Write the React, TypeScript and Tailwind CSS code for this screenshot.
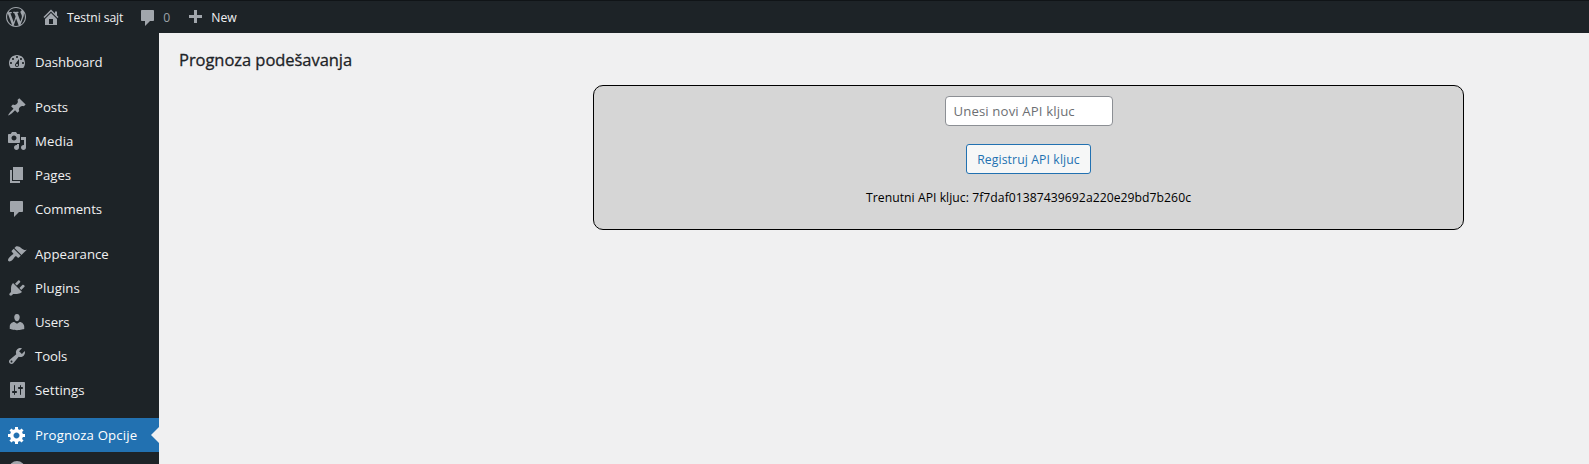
type IconProps = { d: string; size?: string; className?: string };

function Icon({ d, size = "size-5", className = "" }: IconProps) {
  return (
    <svg viewBox="0 0 20 20" fill="currentColor" className={`${size} shrink-0 ${className}`} aria-hidden="true">
      <path d={d} />
    </svg>
  );
}

const icons = {
  wordpress:
    "M20 10c0-5.51-4.49-10-10-10C4.48 0 0 4.49 0 10c0 5.52 4.48 10 10 10 5.51 0 10-4.48 10-10zM7.78 15.37L4.37 6.22c.55-.02 1.17-.08 1.17-.08.5-.06.44-1.13-.06-1.11 0 0-1.45.11-2.37.11-.18 0-.37 0-.58-.01C4.12 2.69 6.87 1.11 10 1.11c2.33 0 4.45.87 6.05 2.34-.68-.11-1.65.39-1.65 1.58 0 .74.45 1.36.9 2.1.35.61.55 1.36.55 2.46 0 1.49-1.4 5-1.4 5l-3.03-8.37c.54-.02.82-.17.82-.17.5-.05.44-1.25-.06-1.22 0 0-1.44.12-2.38.12-.87 0-2.33-.12-2.33-.12-.5-.03-.56 1.2-.06 1.22l.92.08 1.26 3.41zM17.41 10c.24-.64.74-1.87.43-4.25.7 1.29 1.05 2.71 1.05 4.25 0 3.29-1.73 6.24-4.4 7.78.97-2.59 1.94-5.2 2.92-7.78zM6.1 18.09C3.12 16.65 1.11 13.53 1.11 10c0-1.3.23-2.48.72-3.59C3.25 10.3 4.67 14.2 6.1 18.09zm4.03-6.63l2.58 6.98c-.86.29-1.76.45-2.71.45-.79 0-1.57-.11-2.29-.33.81-2.38 1.62-4.74 2.42-7.1z",
  home: "M16 8.5l1.53 1.53-1.06 1.06L10 4.6l-6.47 6.49-1.06-1.06L10 2.5l4 4v-2h2v4zm-6-2.46l6 5.99V18H4v-5.97zM12 17v-5H8v5h4z",
  comments: "M4 2h11c.55 0 1 .45 1 1v9c0 .55-.45 1-1 1h-3l-5 5v-5H4c-.55 0-1-.45-1-1V3c0-.55.45-1 1-1z",
  plus: "M17 7v3h-5v5H9v-5H4V7h5V2h3v5h5z",
  dashboard:
    "M3.76 16h12.48c1.1-1.37 1.76-3.11 1.76-5 0-4.42-3.58-8-8-8s-8 3.58-8 8c0 1.89.66 3.63 1.76 5zM10 4c.55 0 1 .45 1 1s-.45 1-1 1-1-.45-1-1 .45-1 1-1zM6 6c.55 0 1 .45 1 1s-.45 1-1 1-1-.45-1-1 .45-1 1-1zm8 0c.55 0 1 .45 1 1s-.45 1-1 1-1-.45-1-1 .45-1 1-1zm-5.37 5.55L12 7v6c0 1.1-.9 2-2 2s-2-.9-2-2c0-.57.24-1.08.63-1.45zM4 10c.55 0 1 .45 1 1s-.45 1-1 1-1-.45-1-1 .45-1 1-1zm12 0c.55 0 1 .45 1 1s-.45 1-1 1-1-.45-1-1 .45-1 1-1zm-5 3c0-.55-.45-1-1-1s-1 .45-1 1 .45 1 1 1 1-.45 1-1z",
  post: "M10.44 3.02l1.82-1.82 6.36 6.35-1.83 1.82c-1.05-.68-2.48-.57-3.41.36l-.75.75c-.92.93-1.04 2.35-.35 3.41l-1.83 1.82-2.41-2.41-2.8 2.79c-.42.42-3.38 2.71-3.8 2.29s1.86-3.39 2.28-3.81l2.79-2.79L4.1 9.36l1.83-1.82c1.05.69 2.48.57 3.4-.36l.75-.75c.93-.92 1.05-2.35.36-3.41z",
  media:
    "M13 11V4c0-.55-.45-1-1-1h-1.67L9 1H5L3.67 3H2c-.55 0-1 .45-1 1v7c0 .55.45 1 1 1h10c.55 0 1-.45 1-1zM7 4.5c1.38 0 2.5 1.12 2.5 2.5S8.38 9.5 7 9.5 4.5 8.38 4.5 7 5.62 4.5 7 4.5zM14 6h5v10.5c0 1.38-1.12 2.5-2.5 2.5S14 17.88 14 16.5s1.12-2.5 2.5-2.5c.17 0 .34.02.5.05V9h-3V6zm-4 8.05V13h2v3.5c0 1.38-1.12 2.5-2.5 2.5S7 17.88 7 16.5 8.12 14 9.5 14c.17 0 .34.02.5.05z",
  page: "M6 15V2h10v13H6zm-1 1h8v2H3V5h2v11z",
  appearance:
    "M14.48 11.06L7.41 3.99l1.5-1.5c.5-.56 2.3-.47 3.51.32 1.21.8 1.43 1.28 2.91 2.1 1.18.64 2.45 1.26 4.45.85zm-.71.71L6.7 4.7 4.93 6.47c-.39.39-.39 1.02 0 1.41l1.06 1.06c.39.39.39 1.03 0 1.42-.6.6-1.43 1.11-2.21 1.69-.35.26-.7.53-1.01.84C1.43 14.23.4 16.08 1.4 17.07c.99 1 2.84-.03 4.18-1.36.31-.31.58-.66.85-1.02.57-.78 1.08-1.61 1.69-2.21.39-.39 1.02-.39 1.41 0l1.06 1.06c.39.39 1.02.39 1.41 0z",
  plugins:
    "M13.11 4.36L9.87 7.6 8 5.73l3.24-3.24c.35-.34 1.05-.2 1.56.32.52.51.66 1.21.31 1.55zm-8 1.77l.91-1.12 9.01 9.01-1.19.84c-.71.71-2.63 1.16-3.82 1.16H6.14L4.9 17.26c-.59.59-1.54.59-2.12 0-.59-.58-.59-1.53 0-2.12l1.24-1.24v-3.88c0-1.13.4-3.19 1.09-3.89zm7.26 3.97l3.24-3.24c.34-.35 1.04-.21 1.55.31.52.51.66 1.21.31 1.55l-3.24 3.25z",
  users:
    "M10 9.25c-2.27 0-2.73-3.44-2.73-3.44C7 4.02 7.82 2 9.97 2c2.16 0 2.98 2.02 2.71 3.81 0 0-.41 3.44-2.68 3.44zm0 2.57L12.72 10c2.39 0 4.52 2.33 4.52 4.53v2.49s-3.65 1.13-7.24 1.13c-3.65 0-7.24-1.13-7.24-1.13v-2.49c0-2.25 1.94-4.48 4.47-4.48z",
  tools:
    "M16.68 9.77c-1.34 1.34-3.3 1.67-4.95.99l-5.41 6.52c-.99.99-2.59.99-3.58 0s-.99-2.59 0-3.57l6.52-5.42c-.68-1.65-.35-3.61.99-4.95 1.28-1.28 3.12-1.62 4.72-1.06l-2.89 2.89 2.82 2.82 2.86-2.87c.53 1.58.18 3.39-1.08 4.65zM3.81 16.21c.4.39 1.04.39 1.43 0 .4-.4.4-1.04 0-1.43-.39-.4-1.03-.4-1.43 0-.39.39-.39 1.03 0 1.43z",
  settings:
    "M18 17V3c0-.55-.45-1-1-1H4c-.55 0-1 .45-1 1v14c0 .55.45 1 1 1h13c.55 0 1-.45 1-1zM8 11h1c.55 0 1 .45 1 1s-.45 1-1 1H8v1.5c0 .28-.22.5-.5.5s-.5-.22-.5-.5V13H6c-.55 0-1-.45-1-1s.45-1 1-1h1V5.5c0-.28.22-.5.5-.5s.5.22.5.5V11zm5-2h-1c-.55 0-1-.45-1-1s.45-1 1-1h1V5.5c0-.28.22-.5.5-.5s.5.22.5.5V7h1c.55 0 1 .45 1 1s-.45 1-1 1h-1v5.5c0 .28-.22.5-.5.5s-.5-.22-.5-.5V9z",
  generic:
    "M18 12h-2.18c-.17.7-.44 1.35-.81 1.93l1.54 1.54-2.1 2.1-1.54-1.54c-.58.36-1.23.63-1.91.79V19H8v-2.18c-.68-.16-1.33-.43-1.91-.79l-1.54 1.54-2.12-2.12 1.54-1.54c-.36-.58-.63-1.23-.79-1.91H1V9.03h2.17c.16-.7.44-1.35.8-1.94L2.43 5.55l2.1-2.1 1.54 1.54c.58-.37 1.24-.64 1.93-.81V2h3v2.18c.68.16 1.33.43 1.91.79l1.54-1.54 2.12 2.12-1.54 1.54c.36.59.64 1.24.8 1.94H18V12zm-8.5 1.5c1.66 0 3-1.34 3-3s-1.34-3-3-3-3 1.34-3 3 1.34 3 3 3z",
  circle: "M10 2a8 8 0 1 0 0 16 8 8 0 0 0 0-16z",
};

type Entry = { label: string; icon: string; spacing?: string };

const groups: Entry[][] = [
  [{ label: "Dashboard", icon: icons.dashboard, spacing: "tracking-[-0.05px]" }],
  [
    { label: "Posts", icon: icons.post },
    { label: "Media", icon: icons.media, spacing: "tracking-[0.1px]" },
    { label: "Pages", icon: icons.page },
    { label: "Comments", icon: icons.comments },
  ],
  [
    { label: "Appearance", icon: icons.appearance },
    { label: "Plugins", icon: icons.plugins, spacing: "tracking-[0.1px]" },
    { label: "Users", icon: icons.users, spacing: "tracking-[-0.1px]" },
    { label: "Tools", icon: icons.tools, spacing: "tracking-[-0.1px]" },
    { label: "Settings", icon: icons.settings, spacing: "tracking-[0.1px]" },
  ],
];

function MenuItem({ label, icon, spacing = "" }: Entry) {
  return (
    <li className="flex h-[34px] items-center pl-[7px] text-[#f0f0f1]">
      <Icon d={icon} className="text-[#a1a6ac]" />
      <span className={`ml-2 ${spacing}`}>{label}</span>
    </li>
  );
}

function Sidebar() {
  return (
    <nav className="w-[159px] shrink-0 bg-[#1d2327] pt-3 text-[13.2px] leading-[18px]">
      {groups.map((group) => (
        <ul key={group[0].label} className="mb-[11px]">
          {group.map((entry) => (
            <MenuItem key={entry.label} {...entry} />
          ))}
        </ul>
      ))}
      <div className="relative flex h-[34px] items-center bg-[#2271b1] pl-[7px] text-white">
        <Icon d={icons.generic} />
        <span className="ml-2 tracking-[0.14px]">Prognoza Opcije</span>
        <span className="absolute top-[9px] right-0 border-y-8 border-r-8 border-y-transparent border-r-[#f0f0f1]" />
      </div>
      <div className="flex h-[34px] items-center pl-[7px]">
        <Icon d={icons.circle} className="text-[#a1a6ac]" />
      </div>
    </nav>
  );
}

function TopBar() {
  return (
    <header className="flex h-[33px] shrink-0 items-center border-t border-[#101417] bg-[#1d2327] text-[12.2px] leading-8 text-[#f0f0f1]">
      <Icon d={icons.wordpress} className="ml-1.5 text-[#a1a6ac]" />
      <Icon d={icons.home} className="ml-[15px] text-[#a1a6ac]" />
      <span className="ml-[6px] pt-0.5 tracking-[-0.1px]">Testni sajt</span>
      <Icon d={icons.comments} className="mt-0.5 ml-[15px] text-[#a1a6ac]" />
      <span className="ml-[5px] pt-0.5 text-[#9ca2a7]">0</span>
      <Icon d={icons.plus} className="mt-0.5 ml-[15px] text-[#a1a6ac]" />
      <span className="ml-[6px] pt-0.5">New</span>
    </header>
  );
}

export default function App() {
  return (
    <div className="flex h-[464px] w-full flex-col overflow-hidden bg-[#f0f0f1] font-['Open_Sans','Noto_Sans',sans-serif]">
      <TopBar />
      <div className="flex min-h-0 flex-1">
        <Sidebar />
        <main className="flex-1 pl-5">
          <h1 className="mt-[15px] h-[37px] text-[16.5px] leading-6 font-medium tracking-[-0.05px] text-[#1d2327] [-webkit-text-stroke:0.3px_#1d2327]">
            Prognoza podešavanja
          </h1>
          <section className="ml-[414px] flex h-[145px] w-[871px] flex-col items-center rounded-[10px] border border-black bg-[#d6d6d6] pt-[10px]">
            <input
              type="text"
              placeholder="Unesi novi API kljuc"
              className="h-[30px] w-[168px] rounded border border-[#8c8f94] bg-white px-2 text-[13.2px] tracking-[0.12px] placeholder:text-[#6d6f73]"
            />
            <button className="mt-[18px] h-[30px] w-[125px] rounded-[3px] border border-[#2271b1] bg-[#f6f7f7] pt-0.5 text-[12.2px] tracking-[0.12px] text-[#2271b1]">
              Registruj API kljuc
            </button>
            <p className="mt-[14px] text-[12.2px] leading-5 tracking-[0.04px] text-black">
              Trenutni API kljuc: 7f7daf01387439692a220e29bd7b260c
            </p>
          </section>
        </main>
      </div>
    </div>
  );
}
